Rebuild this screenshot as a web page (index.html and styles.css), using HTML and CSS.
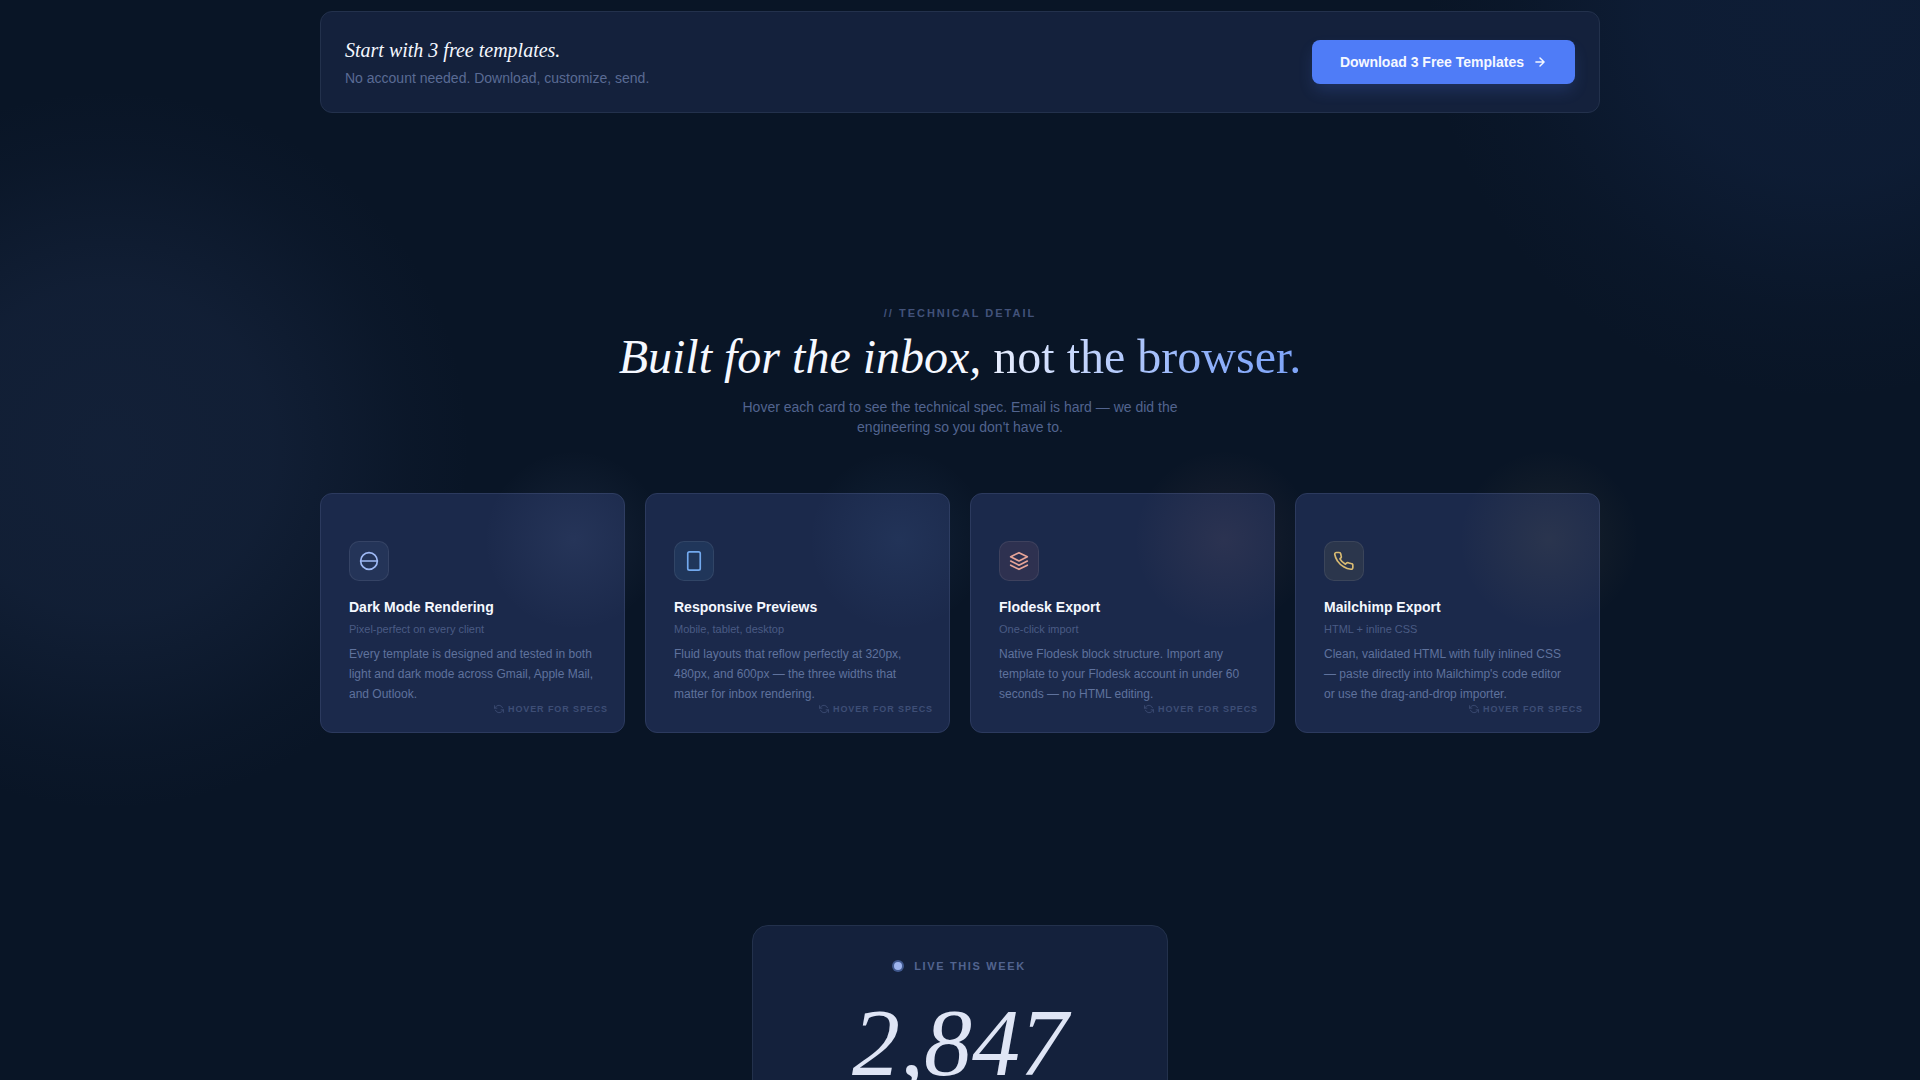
FILE: index.html
```html
<!DOCTYPE html>
<html lang="en">
<head>
    <meta charset="UTF-8">
    <meta name="viewport" content="width=device-width, initial-scale=1.0">
    <title>Email Templates</title>
    <link rel="stylesheet" href="styles.css">
</head>
<body>
    <main class="page">
        <section class="banner">
            <div>
                <h3 class="banner__title">Start with 3 free templates.</h3>
                <p class="banner__text">No account needed. Download, customize, send.</p>
            </div>
            <a href="#download" class="btn">
                Download 3 Free Templates
                <svg class="btn__icon"><use href="#arrow-icon"></use></svg>
            </a>
        </section>

        <section class="features">
            <header class="section-header">
                <p class="eyebrow">// Technical detail</p>
                <h2 class="section-title"><em>Built for the inbox,</em> <span class="section-title__accent">not the browser.</span></h2>
                <p class="section-text">Hover each card to see the technical spec. Email is hard — we did the engineering so you don't have to.</p>
            </header>

            <div class="card-grid">
                <article class="card card--periwinkle">
                    <div class="card__icon"><svg><use href="#contrast-icon"></use></svg></div>
                    <h3 class="card__title">Dark Mode Rendering</h3>
                    <p class="card__subtitle">Pixel-perfect on every client</p>
                    <p class="card__text">Every template is designed and tested in both light and dark mode across Gmail, Apple Mail, and Outlook.</p>
                    <span class="card__hint"><svg><use href="#flip-icon"></use></svg>Hover for specs</span>
                </article>
                <article class="card card--blue">
                    <div class="card__icon"><svg><use href="#device-icon"></use></svg></div>
                    <h3 class="card__title">Responsive Previews</h3>
                    <p class="card__subtitle">Mobile, tablet, desktop</p>
                    <p class="card__text">Fluid layouts that reflow perfectly at 320px, 480px, and 600px — the three widths that matter for inbox rendering.</p>
                    <span class="card__hint"><svg><use href="#flip-icon"></use></svg>Hover for specs</span>
                </article>
                <article class="card card--rose">
                    <div class="card__icon"><svg><use href="#layers-icon"></use></svg></div>
                    <h3 class="card__title">Flodesk Export</h3>
                    <p class="card__subtitle">One-click import</p>
                    <p class="card__text">Native Flodesk block structure. Import any template to your Flodesk account in under 60 seconds — no HTML editing.</p>
                    <span class="card__hint"><svg><use href="#flip-icon"></use></svg>Hover for specs</span>
                </article>
                <article class="card card--gold">
                    <div class="card__icon"><svg><use href="#phone-icon"></use></svg></div>
                    <h3 class="card__title">Mailchimp Export</h3>
                    <p class="card__subtitle">HTML + inline CSS</p>
                    <p class="card__text">Clean, validated HTML with fully inlined CSS — paste directly into Mailchimp's code editor or use the drag-and-drop importer.</p>
                    <span class="card__hint"><svg><use href="#flip-icon"></use></svg>Hover for specs</span>
                </article>
            </div>
        </section>

        <section class="live">
            <p class="live__label"><span class="live__dot"></span>Live this week</p>
            <p class="live__number">2,847</p>
        </section>
    </main>

    <svg style="display: none;">
        <symbol id="arrow-icon" viewBox="0 0 24 24">
            <path d="M5 12h14M12 5l7 7-7 7"/>
        </symbol>
        <symbol id="contrast-icon" viewBox="0 0 24 24">
            <circle cx="12" cy="12" r="10"/>
            <path d="M2 12h20"/>
        </symbol>
        <symbol id="device-icon" viewBox="0 0 24 24">
            <rect x="4.5" y="1" width="15" height="22" rx="2"/>
        </symbol>
        <symbol id="layers-icon" viewBox="0 0 24 24">
            <path d="M12 2L2 7l10 5 10-5-10-5zM2 17l10 5 10-5M2 12l10 5 10-5"/>
        </symbol>
        <symbol id="phone-icon" viewBox="0 0 24 24" overflow="visible">
            <path d="M22.6 17.2v2.7a2 2 0 0 1-2.18 2 19.79 19.79 0 0 1-8.8-3.07A19.5 19.5 0 0 1 4.3 12.2 19.79 19.79 0 0 1 .9 3.9 2 2 0 0 1 2.9 1.8h3.2a2 2 0 0 1 2 1.72c.13.96.3 1.7.6 2.6a2 2 0 0 1-.45 2.11L7.1 9.5a16 16 0 0 0 6.6 6.3l1.3-1.25a2 2 0 0 1 2.11-.45c.91.34 2.1.7 3.6.95A2 2 0 0 1 22.6 17.2z"/>
        </symbol>
        <symbol id="flip-icon" viewBox="0 0 24 24">
            <path d="M1 4v6h6M23 20v-6h-6"/>
            <path d="M20.49 9A9 9 0 0 0 5.64 5.64L1 10m22 4l-4.64 4.36A9 9 0 0 1 3.51 15"/>
        </symbol>
    </svg>
</body>
</html>
```
FILE: styles.css
```css
* {
    box-sizing: border-box;
    margin: 0;
    padding: 0;
}

/* Two soft lights sit behind the whole page */
body {
    height: 100vh;
    overflow: hidden;
    background:
        radial-gradient(circle 400px at 95% 0, rgba(45, 78, 150, 0.14), rgba(45, 78, 150, 0.12) 45%, rgba(45, 78, 150, 0.03) 78%, transparent),
        radial-gradient(circle 360px at 110px 450px, rgba(60, 80, 130, 0.19), rgba(60, 80, 130, 0.16) 45%, rgba(60, 80, 130, 0.04) 82%, transparent),
        #091526;
    color: #f5f8ff;
    font-family: "Liberation Sans", Arial, sans-serif;
}

svg {
    fill: none;
    stroke: currentColor;
    stroke-width: 2;
    stroke-linecap: round;
    stroke-linejoin: round;
}

.page {
    display: flex;
    flex-direction: column;
    max-width: 1280px;
    margin: 0 auto;
    padding-top: 11px;
}

.banner {
    display: flex;
    align-items: center;
    justify-content: space-between;
    padding: 24px;
    border: 1px solid #23314c;
    border-radius: 12px;
    background-color: #14213c;
}

.banner__title {
    margin-bottom: 4px;
    font-family: "Liberation Serif", "Times New Roman", serif;
    font-size: 20px;
    font-style: italic;
    font-weight: 400;
    line-height: 28px;
}

.banner__text {
    color: #5a6b94;
    font-size: 14px;
    line-height: 20px;
}

.btn {
    display: flex;
    align-items: center;
    gap: 9px;
    padding: 12px 28px;
    border-radius: 8px;
    background-color: #4f7cf7;
    box-shadow: 0 8px 16px -2px rgba(79, 124, 247, 0.2);
    color: #f5f8ff;
    font-size: 14px;
    font-weight: 700;
    line-height: 20px;
    text-decoration: none;
}

.btn__icon {
    width: 14px;
    height: 14px;
    stroke-width: 2.5;
}

.features {
    padding: 192px 0;
}

.section-header {
    margin-bottom: 56px;
    text-align: center;
}

.eyebrow {
    margin-bottom: 8px;
    color: #42527a;
    font-size: 11px;
    font-weight: 700;
    letter-spacing: 2px;
    line-height: 16px;
    text-transform: uppercase;
}

.section-title {
    margin-bottom: 12px;
    font-family: "Liberation Serif", "Times New Roman", serif;
    font-size: 48px;
    font-weight: 400;
    line-height: 56px;
}

.section-title__accent {
    background: linear-gradient(90deg, #e8eefe, #8fb0fa 70%, #7ea4f8);
    background-clip: text;
    -webkit-background-clip: text;
    color: transparent;
}

.section-text {
    max-width: 480px;
    margin: 0 auto;
    color: #52648f;
    font-size: 14px;
    line-height: 20px;
}

.card-grid {
    display: grid;
    grid-template-columns: repeat(4, 1fr);
    gap: 20px;
}

.card {
    position: relative;
    display: flex;
    flex-direction: column;
    justify-content: flex-end;
    min-height: 240px;
    padding: 28px;
    border: 1px solid #2c3a5e;
    border-radius: 12px;
    background-color: #1b294b;
}

/* Coloured glow that spills over the top right corner */
.card::after {
    content: "";
    position: absolute;
    top: -44px;
    right: -40px;
    width: 180px;
    height: 180px;
    background: radial-gradient(closest-side, var(--accent), transparent);
    opacity: 0.08;
    pointer-events: none;
}

.card--periwinkle {
    --accent: #9fb9f5;
    --tint: #243458;
}

.card--blue {
    --accent: #72a9ee;
    --tint: #20365a;
}

.card--rose {
    --accent: #e8a598;
    --tint: #2e3150;
}

.card--gold {
    --accent: #d9bb72;
    --tint: #2b364c;
}

.card__icon {
    display: flex;
    align-items: center;
    justify-content: center;
    width: 40px;
    height: 40px;
    margin-bottom: 16px;
    border: 1px solid rgba(255, 255, 255, 0.08);
    border-radius: 10px;
    background-color: var(--tint);
    color: var(--accent);
}

.card__icon svg {
    width: 20px;
    height: 20px;
    overflow: visible;
}

.card__title {
    margin-bottom: 4px;
    font-size: 14px;
    line-height: 20px;
}

.card__subtitle {
    margin-bottom: 7px;
    color: #4a5b84;
    font-size: 11px;
    line-height: 16px;
}

.card__text {
    color: #5f729d;
    font-size: 12px;
    line-height: 20px;
}

.card__hint {
    position: absolute;
    right: 16px;
    bottom: 16px;
    display: flex;
    align-items: center;
    gap: 4px;
    color: #3e4e76;
    font-size: 9px;
    font-weight: 700;
    letter-spacing: 0.1em;
    line-height: 14px;
    text-transform: uppercase;
}

.card__hint svg {
    width: 10px;
    height: 10px;
}

.live {
    align-self: center;
    width: 100%;
    max-width: 416px;
    padding: 32px 48px;
    border: 1px solid #23314c;
    border-radius: 16px;
    background-color: #14213c;
    text-align: center;
}

.live__label {
    display: flex;
    align-items: center;
    justify-content: center;
    gap: 12px;
    margin-bottom: 24px;
    color: #52648f;
    font-size: 11px;
    font-weight: 700;
    letter-spacing: 0.15em;
    line-height: 16px;
    text-transform: uppercase;
}

.live__dot {
    width: 8px;
    height: 8px;
    border-radius: 50%;
    background-color: #9db4ee;
    box-shadow: 0 0 0 2px rgba(107, 143, 224, 0.5);
}

.live__number {
    color: #dfe5f5;
    font-family: "Liberation Serif", "Times New Roman", serif;
    font-size: 96px;
    font-style: italic;
    line-height: 90px;
}
```
